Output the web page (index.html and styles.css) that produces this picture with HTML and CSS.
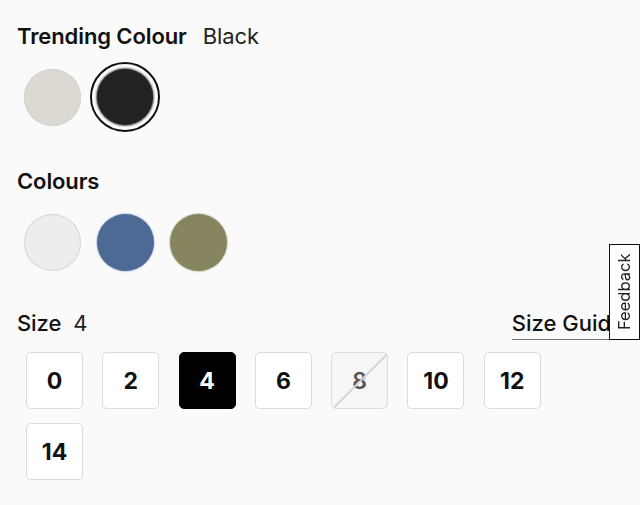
FILE: index.html
```html
<!DOCTYPE html>
<html lang="en">
<head>
<meta charset="utf-8">
<title>Product options</title>
<link rel="stylesheet" href="styles.css">
</head>
<body>
<main class="options">
  <section class="group group-trending">
    <h2 class="label"><span class="label-name">Trending Colour</span><span class="label-value">Black</span></h2>
    <div class="swatches">
      <button class="swatch"><span class="dot dot-stone"></span></button>
      <button class="swatch is-selected"><span class="dot dot-black"></span></button>
    </div>
  </section>
  <section class="group group-colours">
    <h2 class="label"><span class="label-name">Colours</span></h2>
    <div class="swatches">
      <button class="swatch"><span class="dot dot-white"></span></button>
      <button class="swatch"><span class="dot dot-blue"></span></button>
      <button class="swatch"><span class="dot dot-olive"></span></button>
    </div>
  </section>
  <section class="group group-size">
    <div class="size-head">
      <h2 class="label label-tight"><span class="label-name label-size">Size</span><span class="label-value">4</span></h2>
      <a class="size-guide" href="#">Size Guide</a>
    </div>
    <div class="sizes">
      <button class="size">0</button>
      <button class="size">2</button>
      <button class="size is-selected">4</button>
      <button class="size">6</button>
      <button class="size is-disabled">8</button>
      <button class="size">10</button>
      <button class="size">12</button>
      <button class="size">14</button>
    </div>
  </section>
</main>
<button class="feedback">Feedback</button>
</body>
</html>
```

FILE: styles.css
```css
* { box-sizing: border-box; }
html, body { margin: 0; padding: 0; }
body {
  background: #fafafa;
  font-family: Inter, "Noto Sans", Arial, sans-serif;
  color: #111;
  width: 640px;
  height: 505px;
  overflow: hidden;
}
.options {
  padding: 22px 17px 0 17px;
  display: flex;
  flex-direction: column;
}
.label {
  margin: 0;
  font-size: 22px;
  line-height: 28px;
  font-weight: 600;
  display: flex;
  align-items: center;
  gap: 16px;
  letter-spacing: -0.1px;
}
.label-tight { gap: 12px; }
.label-size { font-weight: 500; }
.label-value { font-weight: 400; color: #222; }
.swatches {
  display: flex;
  gap: 3px;
  margin-top: 12px;
}
.swatch {
  width: 70px;
  height: 70px;
  padding: 0;
  border: 2px solid transparent;
  border-radius: 50%;
  background: transparent;
  display: flex;
  align-items: center;
  justify-content: center;
}
.swatch.is-selected {
  border-color: #111;
  background: #fff;
}
.dot {
  display: block;
  width: 57px;
  height: 57px;
  border-radius: 50%;
}
.is-selected .dot { width: 56px; height: 56px; }
.dot-stone { background: #dcd9d3; box-shadow: inset 0 0 0 1px #d4d1cb; }
.dot-black { background: #222222; box-shadow: 0 0 2px 1px #555; }
.dot-white { background: #ededed; box-shadow: inset 0 0 0 1px #d6d6d6; }
.dot-blue { background: #4d6a94; box-shadow: 0 0 1px 1px #c7d3e6; }
.dot-olive { background: #86855f; box-shadow: 0 0 1px 1px #d3d2c2; }
.group-colours { margin-top: 35px; }
.group-size { margin-top: 32px; }
.size-head {
  display: flex;
  justify-content: space-between;
  align-items: center;
}
.size-guide {
  font-size: 22px;
  line-height: 28px;
  font-weight: 500;
  color: #111;
  text-decoration: none;
  border-bottom: 1px solid #777;
  padding-bottom: 2px;
  margin-bottom: -3px;
  margin-right: -1px;
  letter-spacing: 0;
}
.sizes {
  display: flex;
  flex-wrap: wrap;
  column-gap: 19.3px;
  row-gap: 14px;
  margin-top: 15px;
  padding-left: 9px;
  width: 560px;
}
.size {
  position: relative;
  width: 57px;
  height: 57px;
  padding: 0;
  border: 1.5px solid #dcdcdc;
  border-radius: 5px;
  background: #fff;
  font-family: Inter, "Noto Sans", Arial, sans-serif;
  font-size: 23px;
  font-weight: 700;
  color: #111;
  display: flex;
  align-items: center;
  justify-content: center;
  overflow: hidden;
}
.size.is-selected {
  background: #000;
  border-color: #000;
  color: #fff;
}
.size.is-disabled {
  background: #f6f6f6;
  color: #555;
  font-weight: 600;
}
.size.is-disabled::after {
  content: "";
  position: absolute;
  left: 50%;
  top: 50%;
  width: 80px;
  height: 1.5px;
  background: #d4d4d4;
  transform: translate(-50%, -50%) rotate(-45deg);
}
.feedback {
  position: fixed;
  right: 0;
  top: 244px;
  width: 31px;
  height: 96px;
  padding: 0;
  border: 1.5px solid #111;
  background: #fff;
  font-family: Inter, "Noto Sans", Arial, sans-serif;
  font-size: 16.5px;
  font-weight: 400;
  color: #222;
  writing-mode: vertical-rl;
  transform: rotate(180deg);
  display: flex;
  align-items: center;
  justify-content: center;
}
```
